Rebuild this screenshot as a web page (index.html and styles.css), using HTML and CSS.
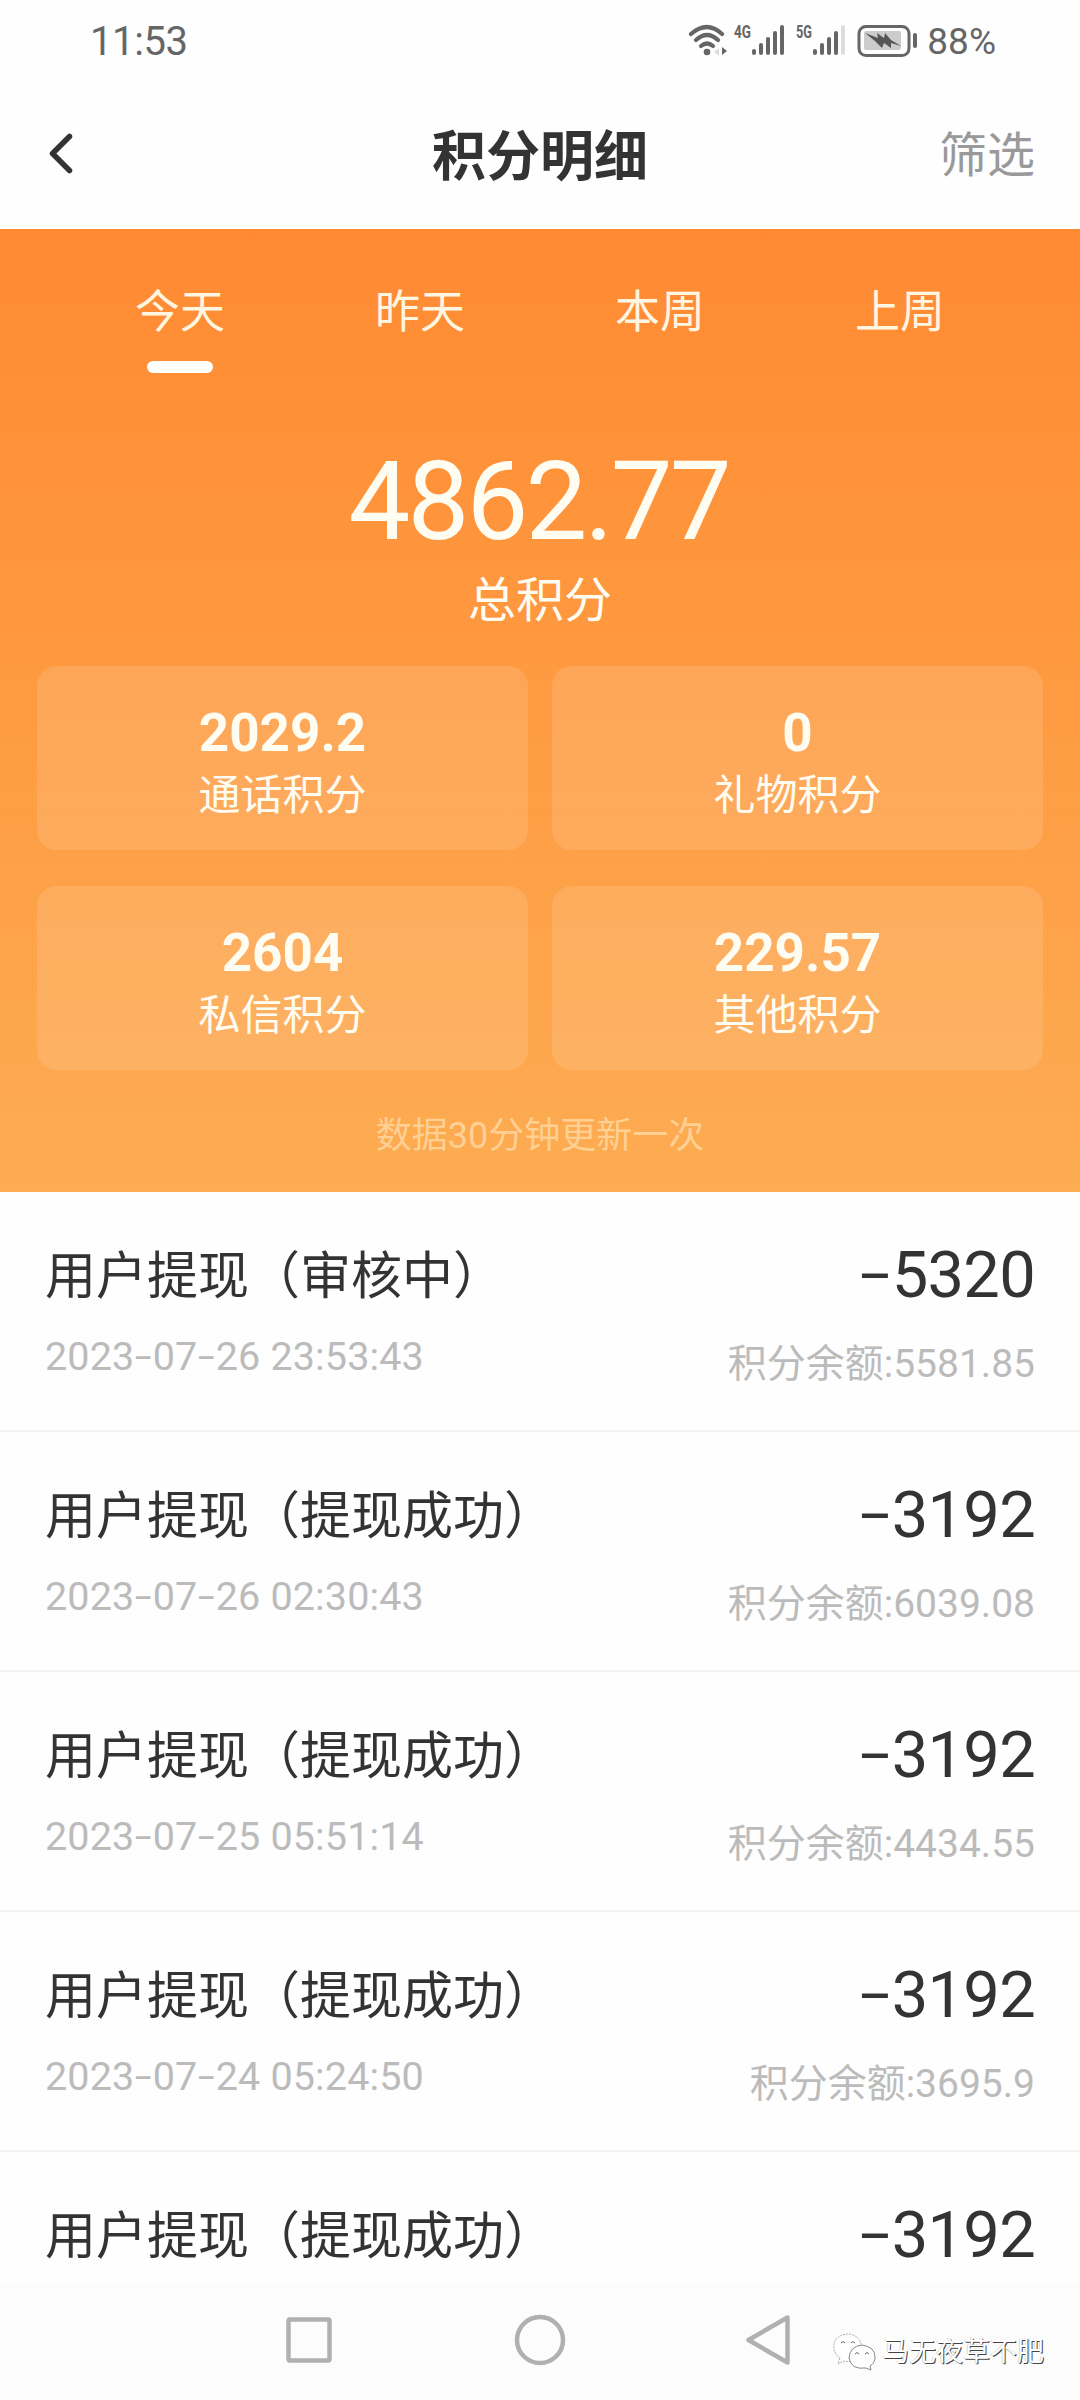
FILE: index.html
```html
<!DOCTYPE html>
<html lang="zh-CN">
<head>
<meta charset="utf-8">
<title>积分明细</title>
<link rel="stylesheet" href="styles.css">
</head>
<body>
<div class="screen">
  <div class="status">
    <span class="time">11:53</span>
    <svg class="status-icons" width="236" height="40" viewBox="0 0 236 40">
      <g fill="none" stroke="#666" stroke-width="4.2" stroke-linecap="round">
        <path d="M3 13Q19 -1 34 13"/><path d="M8 19Q19 9 30 19"/><path d="M13 25Q19 20 25 25"/>
      </g>
      <circle cx="19" cy="31" r="3.3" fill="#666"/>
      <path d="M31 27v8l-5-4z" fill="#ddd"/><path d="M34 26v8l5-4z" fill="#666"/>
      <g class="net" fill="#666"><text x="46" y="17" textLength="17" lengthAdjust="spacingAndGlyphs">4G</text><text x="108" y="17" textLength="16" lengthAdjust="spacingAndGlyphs">5G</text></g>
      <g fill="#666">
        <rect x="64" y="28" width="4" height="6" rx="2"/><rect x="71" y="22" width="4" height="12" rx="2"/><rect x="78" y="16" width="4" height="18" rx="2"/><rect x="85" y="10" width="4" height="24" rx="2"/><rect x="92" y="4" width="4" height="30" rx="2"/>
        <rect x="125" y="28" width="4" height="6" rx="2"/><rect x="132" y="22" width="4" height="12" rx="2"/><rect x="139" y="16" width="4" height="18" rx="2"/><rect x="146" y="10" width="4" height="24" rx="2"/>
        <rect x="153" y="4" width="4" height="30" rx="2" fill="#ddd"/>
        <rect x="225" y="12" width="4" height="15" rx="2"/>
      </g>
      <rect x="171" y="5.500" width="50" height="29" rx="7" fill="none" stroke="#666" stroke-width="3"/>
      <rect x="176" y="10" width="37" height="19" rx="2" fill="#ccc"/>
      <path d="M177 12L190 17L189 12L196 17L197 12L203 19L213 25L203 22L203 27L196 22L194 27L187 20Z" fill="#555"/>
    </svg>
    <span class="percent">88%</span>
  </div>

  <header class="header">
    <svg class="back" width="30" height="46" viewBox="0 0 30 46"><path d="M24.500 5.500L7.500 22.500L24.500 39.500" fill="none" stroke="#333" stroke-width="5.500" stroke-linecap="round" stroke-linejoin="round"/></svg>
    <h1>积分明细</h1>
    <span class="filter">筛选</span>
  </header>

  <section class="summary">
    <nav class="tabs">
      <span class="tab active">今天</span><span class="tab">昨天</span><span class="tab">本周</span><span class="tab">上周</span>
    </nav>
    <div class="total">4862.77</div>
    <div class="total-label">总积分</div>
    <div class="cards">
      <div class="card"><b>2029.2</b><span>通话积分</span></div>
      <div class="card"><b>0</b><span>礼物积分</span></div>
      <div class="card"><b>2604</b><span>私信积分</span></div>
      <div class="card"><b>229.57</b><span>其他积分</span></div>
    </div>
    <div class="hint">数据30分钟更新一次</div>
  </section>

  <main class="list">
    <div class="row">
      <div class="left"><div class="name">用户提现（审核中）</div><div class="date">2023<i>-</i>07<i>-</i>26 23:53:43</div></div>
      <div class="right"><div class="amount"><i>-</i>5320</div><div class="balance">积分余额:5581.85</div></div>
    </div>
    <div class="row">
      <div class="left"><div class="name">用户提现（提现成功）</div><div class="date">2023<i>-</i>07<i>-</i>26 02:30:43</div></div>
      <div class="right"><div class="amount"><i>-</i>3192</div><div class="balance">积分余额:6039.08</div></div>
    </div>
    <div class="row">
      <div class="left"><div class="name">用户提现（提现成功）</div><div class="date">2023<i>-</i>07<i>-</i>25 05:51:14</div></div>
      <div class="right"><div class="amount"><i>-</i>3192</div><div class="balance">积分余额:4434.55</div></div>
    </div>
    <div class="row">
      <div class="left"><div class="name">用户提现（提现成功）</div><div class="date">2023<i>-</i>07<i>-</i>24 05:24:50</div></div>
      <div class="right"><div class="amount"><i>-</i>3192</div><div class="balance">积分余额:3695.9</div></div>
    </div>
    <div class="row last">
      <div class="left"><div class="name">用户提现（提现成功）</div></div>
      <div class="right"><div class="amount"><i>-</i>3192</div></div>
    </div>
  </main>

  <footer class="navbar">
    <svg class="keys" width="510" height="60" viewBox="0 0 510 60" fill="none" stroke="#b0b0b0" stroke-width="4.500" stroke-linejoin="round">
      <rect x="8.500" y="9.500" width="41" height="41" rx="1.500"/>
      <circle cx="260" cy="30" r="23"/>
      <path d="M507.500 7.500L468.500 30L507.500 52.500Z"/>
    </svg>
    <div class="watermark">
      <svg width="46" height="42" viewBox="0 0 46 42" fill="#fff" stroke="#aaa" stroke-width="1">
        <path d="M8 27L6 33L12 30Q27 33 30 17Q28 3 15 3Q1 5 2 17Q3 24 8 27Z" stroke-dasharray="2 1"/>
        <path d="M30 14Q43 16 43 26Q43 32 38 35L39 39L34 37Q19 39 17 27Q18 15 30 14Z" stroke="#888"/>
        <path d="M9 12q2-3 4 0M19 12q2-3 4 0M23 23q2-3 4 0M33 23q2-3 4 0" fill="none" stroke="#666"/>
      </svg>
      <span>马无夜草不肥</span>
    </div>
  </footer>
</div>
</body>
</html>
```
FILE: styles.css
```css
* { box-sizing: border-box; margin: 0; padding: 0; }
body { font-family: Roboto, "Noto Sans CJK SC", sans-serif; color: #333; background: #fefefe; }
.screen { width: 1080px; height: 2400px; display: flex; flex-direction: column; overflow: hidden; }

.status { height: 82px; display: flex; align-items: center; color: #666; padding: 0 84px 0 90px; }
.time { font-size: 40px; line-height: 80px; letter-spacing: -.4px; padding-top: 2px; flex: 1; }
.status-icons { flex: none; margin-right: 3px; margin-top: -1px; }
.net { font: 700 18px "Roboto", sans-serif; }
.percent { font-size: 37px; }

.header { height: 147px; display: flex; align-items: center; justify-content: space-between; padding: 0 45px 3px; }
.back { margin-right: 66px; }
h1 { font-size: 54px; line-height: 80px; font-weight: 700; padding-top: 7px; }
.filter { font-size: 48px; line-height: 80px; padding-top: 4px; color: #999; }

.summary { height: 963px; background: linear-gradient(#ff8a32, #fdac52); color: #fffcf2; display: flex; flex-direction: column; align-items: center; }
.tabs { display: flex; width: 960px; height: 144px; padding-top: 52px; }
.tab { width: 240px; font-size: 45px; line-height: 64px; text-align: center; color: #fff6e2; }
.active::after { content: ""; display: block; width: 66px; height: 12px; border-radius: 6px; background: #fff; margin: 16px auto 0; }
.total { font-size: 110px; line-height: 120px; letter-spacing: -2.8px; text-indent: -2.8px; margin-top: 69px; }
.total-label { font-size: 48px; line-height: 64px; margin-top: 7px; }
.cards { display: grid; grid-template-columns: 491px 491px; grid-auto-rows: 184px; gap: 36px 24px; margin-top: 33px; }
.card { border-radius: 20px; background: rgba(255, 255, 255, .12); display: flex; flex-direction: column; align-items: center; padding-top: 37px; }
.card b { font-size: 53px; line-height: 60px; }
.card span { font-size: 42px; line-height: 64px; padding-top: 1px; }
.hint { font-size: 36px; line-height: 50px; margin-top: 41px; color: #ffd094; }

.list { height: 1091px; overflow: hidden; }
.row { height: 240px; display: flex; justify-content: space-between; padding: 45px 45px 0; border-bottom: 2px solid #f5f5f5; }
.name { font-size: 51px; line-height: 80px; }
.date { font-size: 39.500px; line-height: 50px; letter-spacing: .15px; margin-top: 15px; color: #bbb; }
.right { text-align: right; margin-top: -2px; }
.amount { font-size: 65px; line-height: 80px; letter-spacing: -.7px; }
.balance { font-size: 39px; line-height: 50px; margin-top: 24px; color: #bbb; }
i { font-family: Inter, sans-serif; font-style: normal; display: inline-block; line-height: 1; transform: scale(1.15, .85); }
.amount i { transform: translateX(-2px) scale(1.25, .85); }

.navbar { height: 117px; background: #fcfcfc; display: flex; align-items: center; padding-left: 280px; }
.keys { flex: none; margin-top: -3px; }
.watermark { display: flex; align-items: center; margin: 20px 0 0 42px; gap: 4px; }
.watermark span { font-size: 27px; line-height: 40px; color: #fff; text-shadow: 1px 1px 0 #444, -.5px -.5px 0 #bbb; white-space: nowrap; }
```
